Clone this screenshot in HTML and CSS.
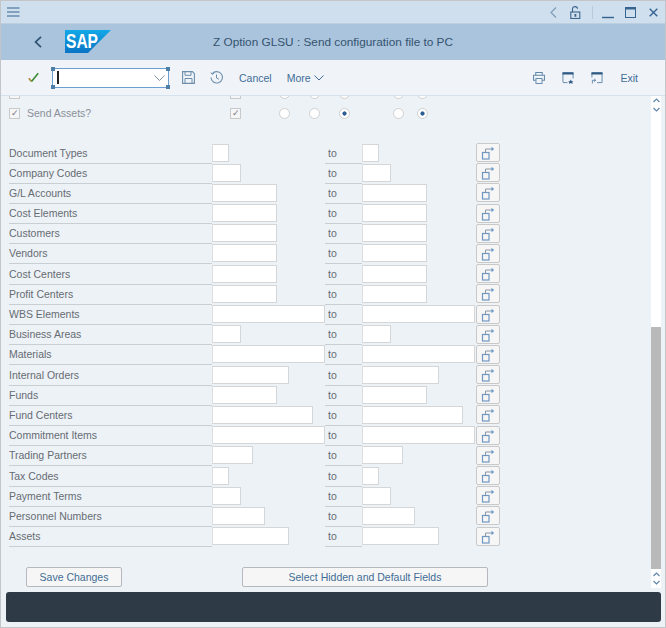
FILE: index.html
```html
<!DOCTYPE html>
<html lang="en">
<head>
  <meta charset="UTF-8">
  <meta name="viewport" content="width=device-width, initial-scale=1.0">
  <title>Z Option GLSU : Send configuration file to PC</title>
  <link rel="stylesheet" href="styles.css">
</head>
<body>
  <svg class="defs" width="0" height="0" aria-hidden="true">
    <symbol id="popout" viewBox="0 0 24 19">
      <rect x="6.5" y="9.5" width="6.5" height="6.5" fill="none" stroke="#6f97c0" stroke-width="1.2"/>
      <path d="M9.5 9V6h7" fill="none" stroke="#8a97a5"/>
      <path d="M15.5 3.8L18.2 6l-2.7 2.2z" fill="#6a9ccb"/>
    </symbol>
  </svg>

  <div class="window">
    <div class="topbar">
      <svg class="icon-menu" width="13" height="10" viewBox="0 0 13 10">
        <path d="M0 1h12.5M0 5h12.5M0 9h12.5" stroke="#34648f" stroke-width="1.2"/>
      </svg>
      <div class="window-controls">
        <svg class="ctl-back" width="7" height="11" viewBox="0 0 7 11"><path d="M6 .5L1 5.5l5 5" fill="none" stroke="#7b9ab8" stroke-width="1.1"/></svg>
        <svg class="ctl-lock" width="11" height="13" viewBox="0 0 11 13">
          <path d="M2.5 6V2.8C2.5 1.4 3.5.6 5 .6s2.5.8 2.5 2.2" fill="none" stroke="#3c658b" stroke-width="1.1"/>
          <rect x=".8" y="6" width="9" height="6.5" fill="none" stroke="#3c658b" stroke-width="1.1"/>
          <rect x="4.5" y="8" width="1.8" height="2.8" fill="#3c658b"/>
        </svg>
        <span class="divider"></span>
        <svg class="ctl-min" width="12" height="13" viewBox="0 0 12 13"><path d="M0 11.5h12" stroke="#34648f" stroke-width="1.4"/></svg>
        <svg class="ctl-max" width="11" height="11" viewBox="0 0 11 11"><rect x=".5" y=".5" width="10" height="10" fill="none" stroke="#34648f"/><path d="M0 1.5h11" stroke="#34648f" stroke-width="2"/></svg>
        <svg width="9" height="9" viewBox="0 0 9 9"><path d="M.7.7l7.6 7.6M8.3.7L.7 8.3" stroke="#34648f" stroke-width="1.4"/></svg>
      </div>
    </div>

    <div class="titlebar">
      <div class="title-left">
        <svg class="icon-back" width="8" height="12" viewBox="0 0 8 12"><path d="M7 .8L1.6 6 7 11.2" fill="none" stroke="#2e4f70" stroke-width="1.7"/></svg>
        <svg class="logo" width="46" height="23" viewBox="0 0 46 23">
          <defs>
            <linearGradient id="sapblue" x1="0" y1="0" x2="0" y2="1">
              <stop offset="0" stop-color="#12a8e8"/>
              <stop offset="1" stop-color="#0a74c4"/>
            </linearGradient>
          </defs>
          <path d="M0 0h46L23 23H0z" fill="url(#sapblue)"/>
          <text x="1" y="17.5" class="logo-text" textLength="32" lengthAdjust="spacingAndGlyphs">SAP</text>
        </svg>
      </div>
      <div class="title-text">Z Option GLSU : Send configuration file to PC</div>
    </div>

    <div class="toolbar">
      <svg class="icon-check" width="11" height="11" viewBox="0 0 11 11">
        <path d="M.8 6.2l2.7 3.3" fill="none" stroke="#b08a2e" stroke-width="1.6"/>
        <path d="M3.5 9.5L10.2 1.2" fill="none" stroke="#3a8a35" stroke-width="1.6"/>
      </svg>
      <div class="command">
        <span class="corner tl"></span><span class="corner tr"></span><span class="corner bl"></span><span class="corner br"></span>
        <span class="caret"></span>
        <svg width="11" height="6" viewBox="0 0 11 6"><path d="M.5.5l5 5 5-5" fill="none" stroke="#7f93a8"/></svg>
      </div>
      <svg class="icon-save" width="13" height="13" viewBox="0 0 13 13">
        <path d="M.6.6h9.8l2 2v9.8H.6z" fill="none" stroke="#6c8eab" stroke-width="1.1"/>
        <path d="M3 .8v3.5h6V.8M3 12.3V7.5h7v4.8" fill="none" stroke="#6c8eab"/>
      </svg>
      <svg class="icon-clock" width="13" height="13" viewBox="0 0 13 13">
        <path d="M2.2 2.8A5.7 5.7 0 1 1 1 6.5" fill="none" stroke="#6c8eab" stroke-width="1.1"/>
        <path d="M.8 1.5l1.3 1.7 1.9-.8M6.5 3.5v3.5l2.5 1.3" fill="none" stroke="#6c8eab"/>
      </svg>
      <span class="tool-text cancel">Cancel</span>
      <span class="tool-text more">More
        <svg width="10" height="6" viewBox="0 0 10 6"><path d="M.5.5L5 5 9.5.5" fill="none" stroke="#416c95"/></svg>
      </span>
      <div class="toolbar-right">
        <svg width="12" height="12" viewBox="0 0 13 13">
          <path d="M3 3.5V.6h7v2.9M3 9H.6V3.5h11.8V9H10" fill="none" stroke="#5f86a8" stroke-width="1.1"/>
          <rect x="3.2" y="7" width="6.6" height="5.4" fill="none" stroke="#5f86a8"/>
        </svg>
        <svg width="12" height="12" viewBox="0 0 12 13">
          <path d="M.5 11V1h11v6" fill="none" stroke="#5f86a8"/>
          <path d="M0 1.5h12" stroke="#2f5a83" stroke-width="2.4"/>
          <path d="M.5 11.5h5" stroke="#5f86a8"/>
          <path d="M9 8l1 2 2 .2-1.5 1.3.5 1.5-2-1-2 1 .5-1.5L6 10.2 8 10z" fill="#2f5a83"/>
        </svg>
        <svg width="12" height="12" viewBox="0 0 12 13">
          <path d="M11.5 11.500V1H.5v5" fill="none" stroke="#5f86a8"/>
          <path d="M0 1.5h12" stroke="#2f5a83" stroke-width="2.4"/>
          <path d="M11.5 11.5H6M1 12.5V9h3.5M3 7.5L4.7 9 3 10.5" fill="none" stroke="#5f86a8"/>
        </svg>
        <span class="tool-text">Exit</span>
      </div>
    </div>

    <div class="main">
      <div class="content">
        <div class="check-row cut">
          <div class="check-label"><span class="checkbox"></span></div>
          <span class="checkbox"></span>
          <span class="radio"></span><span class="radio"></span><span class="radio"></span><span class="radio"></span><span class="radio"></span>
        </div>
        <div class="check-row">
          <div class="check-label"><span class="checkbox on">&#10003;</span><span class="check-text">Send Assets?</span></div>
          <span class="checkbox on">&#10003;</span>
          <span class="radio"></span><span class="radio"></span><span class="radio on"></span><span class="radio"></span><span class="radio on"></span>
        </div>

        <div class="rows">
          <div class="row"><span class="label">Document Types</span><span class="field w17"></span><span class="to">to</span><span class="field w17"></span><span class="popout"><svg width="24" height="19"><use href="#popout"/></svg></span></div>
          <div class="row"><span class="label">Company Codes</span><span class="field w29"></span><span class="to">to</span><span class="field w29"></span><span class="popout"><svg width="24" height="19"><use href="#popout"/></svg></span></div>
          <div class="row"><span class="label">G/L Accounts</span><span class="field w65"></span><span class="to">to</span><span class="field w65"></span><span class="popout"><svg width="24" height="19"><use href="#popout"/></svg></span></div>
          <div class="row"><span class="label">Cost Elements</span><span class="field w65"></span><span class="to">to</span><span class="field w65"></span><span class="popout"><svg width="24" height="19"><use href="#popout"/></svg></span></div>
          <div class="row"><span class="label">Customers</span><span class="field w65"></span><span class="to">to</span><span class="field w65"></span><span class="popout"><svg width="24" height="19"><use href="#popout"/></svg></span></div>
          <div class="row"><span class="label">Vendors</span><span class="field w65"></span><span class="to">to</span><span class="field w65"></span><span class="popout"><svg width="24" height="19"><use href="#popout"/></svg></span></div>
          <div class="row"><span class="label">Cost Centers</span><span class="field w65"></span><span class="to">to</span><span class="field w65"></span><span class="popout"><svg width="24" height="19"><use href="#popout"/></svg></span></div>
          <div class="row"><span class="label">Profit Centers</span><span class="field w65"></span><span class="to">to</span><span class="field w65"></span><span class="popout"><svg width="24" height="19"><use href="#popout"/></svg></span></div>
          <div class="row"><span class="label">WBS Elements</span><span class="field w113"></span><span class="to">to</span><span class="field w113"></span><span class="popout"><svg width="24" height="19"><use href="#popout"/></svg></span></div>
          <div class="row"><span class="label">Business Areas</span><span class="field w29"></span><span class="to">to</span><span class="field w29"></span><span class="popout"><svg width="24" height="19"><use href="#popout"/></svg></span></div>
          <div class="row"><span class="label">Materials</span><span class="field w113"></span><span class="to">to</span><span class="field w113"></span><span class="popout"><svg width="24" height="19"><use href="#popout"/></svg></span></div>
          <div class="row"><span class="label">Internal Orders</span><span class="field w77"></span><span class="to">to</span><span class="field w77"></span><span class="popout"><svg width="24" height="19"><use href="#popout"/></svg></span></div>
          <div class="row"><span class="label">Funds</span><span class="field w65"></span><span class="to">to</span><span class="field w65"></span><span class="popout"><svg width="24" height="19"><use href="#popout"/></svg></span></div>
          <div class="row"><span class="label">Fund Centers</span><span class="field w101"></span><span class="to">to</span><span class="field w101"></span><span class="popout"><svg width="24" height="19"><use href="#popout"/></svg></span></div>
          <div class="row"><span class="label">Commitment Items</span><span class="field w113"></span><span class="to">to</span><span class="field w113"></span><span class="popout"><svg width="24" height="19"><use href="#popout"/></svg></span></div>
          <div class="row"><span class="label">Trading Partners</span><span class="field w41"></span><span class="to">to</span><span class="field w41"></span><span class="popout"><svg width="24" height="19"><use href="#popout"/></svg></span></div>
          <div class="row"><span class="label">Tax Codes</span><span class="field w17"></span><span class="to">to</span><span class="field w17"></span><span class="popout"><svg width="24" height="19"><use href="#popout"/></svg></span></div>
          <div class="row"><span class="label">Payment Terms</span><span class="field w29"></span><span class="to">to</span><span class="field w29"></span><span class="popout"><svg width="24" height="19"><use href="#popout"/></svg></span></div>
          <div class="row"><span class="label">Personnel Numbers</span><span class="field w53"></span><span class="to">to</span><span class="field w53"></span><span class="popout"><svg width="24" height="19"><use href="#popout"/></svg></span></div>
          <div class="row"><span class="label">Assets</span><span class="field w77"></span><span class="to">to</span><span class="field w77"></span><span class="popout"><svg width="24" height="19"><use href="#popout"/></svg></span></div>
        </div>

        <div class="actions">
          <button class="btn btn-save" type="button">Save Changes</button>
          <button class="btn btn-select" type="button">Select Hidden and Default Fields</button>
        </div>
      </div>

      <div class="scrollbar">
        <div class="scroll-arrows">
          <svg width="7" height="5" viewBox="0 0 7 5"><path d="M.5 4l3-3 3 3" fill="none" stroke="#5f87ae" stroke-width="1.2"/></svg>
          <svg width="7" height="5" viewBox="0 0 7 5"><path d="M.5 1l3 3 3-3" fill="none" stroke="#5f87ae" stroke-width="1.2"/></svg>
        </div>
        <div class="scroll-thumb"></div>
        <div class="scroll-arrows bottom">
          <svg width="7" height="5" viewBox="0 0 7 5"><path d="M.5 4l3-3 3 3" fill="none" stroke="#5f87ae" stroke-width="1.2"/></svg>
          <svg width="7" height="5" viewBox="0 0 7 5"><path d="M.5 1l3 3 3-3" fill="none" stroke="#5f87ae" stroke-width="1.2"/></svg>
        </div>
      </div>
    </div>

    <div class="statusbar"></div>
  </div>
</body>
</html>
```

FILE: styles.css
```css
* {
  box-sizing: border-box;
}

body {
  margin: 0;
  font-family: "Liberation Sans", Arial, sans-serif;
  background-color: #edf2f7;
}

.defs {
  position: absolute;
}

.window {
  width: 666px;
  height: 628px;
  border: 1px solid #c3c6c9;
  background-color: #edf2f7;
  display: flex;
  flex-direction: column;
  overflow: hidden;
}

/* top strip */
.topbar {
  height: 23px;
  background-color: #cfdfed;
  border-bottom: 1px solid #bccfe0;
  display: flex;
  align-items: center;
  justify-content: space-between;
  padding: 0 7px 0 6px;
  flex-shrink: 0;
}

.window-controls {
  display: flex;
  align-items: center;
}

.ctl-lock {
  margin-left: 13px;
}

.divider {
  width: 1px;
  height: 13px;
  background-color: #b7cadb;
  margin: 0 9px 0 11px;
}

.ctl-min {
  margin-right: 11px;
}

.ctl-max {
  margin-right: 13px;
}

/* title */
.titlebar {
  height: 36px;
  background-color: #a9c4dc;
  display: grid;
  grid-template-columns: 1fr auto 1fr;
  align-items: center;
  flex-shrink: 0;
}

.title-left {
  display: flex;
  align-items: center;
  padding-left: 33px;
}

.logo {
  margin-left: 23px;
  margin-top: -1px;
}

.logo-text {
  font-family: "Liberation Sans", Arial, sans-serif;
  font-size: 20px;
  font-weight: bold;
  fill: #fff;
}

.title-text {
  font-size: 11.8px;
  color: #36536f;
}

/* toolbar */
.toolbar {
  height: 36px;
  background-color: #f0f4f9;
  border-bottom: 1px solid #d5e1ed;
  display: flex;
  align-items: center;
  padding-left: 27px;
  flex-shrink: 0;
}

.icon-check {
  flex-shrink: 0;
}

.command {
  position: relative;
  width: 117px;
  height: 20px;
  margin-left: 13px;
  background-color: #fff;
  border: 1px solid #6a9fcf;
  display: flex;
  align-items: center;
  justify-content: space-between;
  padding: 0 3px 0 4px;
}

.caret {
  width: 1.5px;
  height: 13px;
  background-color: #222;
}

.corner {
  position: absolute;
  width: 4px;
  height: 4px;
  background-color: #4d7fa9;
}

.corner.tl { top: -2px; left: -2px; }
.corner.tr { top: -2px; right: -2px; }
.corner.bl { bottom: -2px; left: -2px; }
.corner.br { bottom: -2px; right: -2px; }

.icon-save {
  margin-left: 13px;
}

.icon-clock {
  margin-left: 15px;
}

.tool-text {
  font-size: 10.5px;
  color: #416c95;
}

.cancel {
  margin-left: 16px;
}

.more {
  margin-left: 15px;
  display: flex;
  align-items: center;
  gap: 3px;
}

.toolbar-right {
  margin-left: auto;
  padding-right: 27px;
  display: flex;
  align-items: center;
  gap: 17px;
}

/* main area */
.main {
  flex: 1;
  display: flex;
  overflow: hidden;
}

.content {
  width: 650px;
  padding-left: 8px;
  overflow: hidden;
}

.check-row {
  display: grid;
  grid-template-columns: 221px 49px 30px 30px 54px 24px 11px;
  align-items: center;
  height: 12px;
  margin-top: 8px;
  font-size: 10.5px;
  color: #8a9096;
}

.check-row.cut {
  margin-top: -9px;
}

.check-label {
  display: flex;
  align-items: center;
  gap: 7px;
}

.check-text {
  margin-top: -1px;
}

.checkbox {
  width: 11px;
  height: 11px;
  border: 1px solid #c9c9c9;
  background-color: #f5f6f7;
  color: #777;
  font-size: 9px;
  line-height: 9px;
  text-align: center;
}

.radio {
  width: 11px;
  height: 11px;
  border: 1px solid #cfcfcf;
  border-radius: 50%;
  background-color: #fff;
}

.radio.on {
  background: radial-gradient(circle, #2b5f94 0, #2b5f94 1.8px, #fff 2.4px);
}

.rows {
  margin-top: 24.5px;
  display: flex;
  flex-direction: column;
  gap: 2.2px;
}

.row {
  display: grid;
  grid-template-columns: 203px 113px 37px 114px 24px;
  height: 18px;
}

.label,
.to {
  font-size: 10.5px;
  line-height: 19px;
  color: #666c72;
  border-bottom: 1px solid #c9ced3;
}

.to {
  padding-left: 3px;
}

.field {
  height: 18px;
  background-color: #fff;
  border: 1px solid #d4d6d8;
  border-left-color: #dcdee0;
}

.w17 { width: 17px; }
.w29 { width: 29px; }
.w41 { width: 41px; }
.w53 { width: 53px; }
.w65 { width: 65px; }
.w77 { width: 77px; }
.w101 { width: 101px; }
.w113 { width: 113px; }

.popout {
  width: 24px;
  height: 19px;
  margin-top: -0.5px;
  background-color: #f6f6f6;
  border: 1px solid #c9c9c9;
  border-radius: 2px;
  display: block;
}

.popout svg {
  display: block;
  margin: -1px;
}

.actions {
  margin-top: 22px;
  padding-left: 17px;
  display: flex;
  gap: 120px;
}

.btn {
  height: 20px;
  padding: 0;
  font-family: "Liberation Sans", Arial, sans-serif;
  font-size: 10.5px;
  color: #416c95;
  background-color: #f6f6f6;
  border: 1px solid #b5b9bd;
  border-radius: 2px;
}

.btn-save {
  width: 96px;
}

.btn-select {
  width: 246px;
}

/* scrollbar */
.scrollbar {
  width: 10px;
  height: 492px;
  background-color: #fff;
  display: flex;
  flex-direction: column;
}

.scroll-arrows {
  height: 17px;
  display: flex;
  flex-direction: column;
  align-items: center;
  gap: 4px;
  padding-top: 2px;
}

.scroll-thumb {
  height: 242px;
  margin-top: auto;
  background-color: #b9b9b9;
  flex-shrink: 0;
}

.scroll-arrows.bottom {
  height: 19px;
  padding-top: 3px;
  gap: 3px;
}

.statusbar {
  height: 30px;
  margin: 2px 4px 5px 5px;
  background-color: #2f3a47;
  border-radius: 3px;
  flex-shrink: 0;
}
```
